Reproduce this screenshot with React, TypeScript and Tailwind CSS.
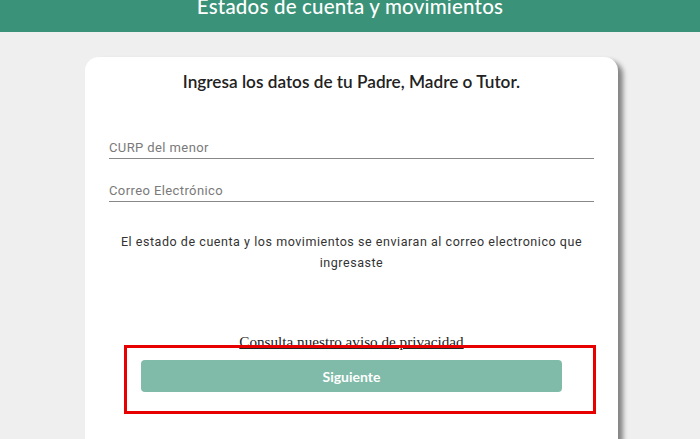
import React from "react";

export default function App() {
  return (
    <div className="relative h-[439px] w-[700px] overflow-hidden bg-[#efefef]">
      <header className="h-[32px] overflow-hidden bg-[#3a9278]">
        <h1 className="-mt-[4px] text-center text-[20.5px] leading-[20px] tracking-[0.2px] text-white font-['Lato',sans-serif] font-medium">
          Estados de cuenta y movimientos
        </h1>
      </header>
      <div className="ml-[85px] mt-[25px] h-[420px] w-[533px] rounded-[14px] bg-white shadow-[5px_4px_5px_rgba(0,0,0,0.45)]">
        <div className="pt-[15px] text-center text-[17.2px] leading-[20px] font-semibold text-[#222] font-['Lato',sans-serif]">
          Ingresa los datos de tu Padre, Madre o Tutor.
        </div>
        <div className="mx-[24px] mt-[45px] flex flex-col gap-[21px]">
          <input
            placeholder="CURP del menor"
            className="h-[22px] w-full border-b border-[#888] bg-transparent text-[13px] tracking-[0.4px] outline-none placeholder:text-[#7a7a7a] font-['Roboto',sans-serif]"
          />
          <input
            placeholder="Correo Electrónico"
            className="h-[22px] w-full border-b border-[#888] bg-transparent text-[13px] tracking-[0.4px] outline-none placeholder:text-[#7a7a7a] font-['Roboto',sans-serif]"
          />
        </div>
        <p className="mx-[28px] mt-[29px] text-center text-[12.5px] leading-[21px] tracking-[0.55px] text-[#333] font-['Roboto',sans-serif]">
          El estado de cuenta y los movimientos se enviaran al correo electronico que ingresaste
        </p>
        <div className="mt-[60px] text-center text-[15.2px] leading-[18px] text-[#222] font-['Liberation_Serif',serif]">
          <a className="underline">Consulta nuestro aviso de privacidad</a>
        </div>
        <div className="mx-[56px] mt-[9px]">
          <button className="h-[32px] w-full rounded-[4px] bg-[#80baa8] text-[14px] font-bold text-white font-['Lato',sans-serif]">
            Siguiente
          </button>
        </div>
      </div>
      <div className="absolute left-[124px] top-[345px] h-[69px] w-[472px] border-[3px] border-[#e60000]" />
    </div>
  );
}
